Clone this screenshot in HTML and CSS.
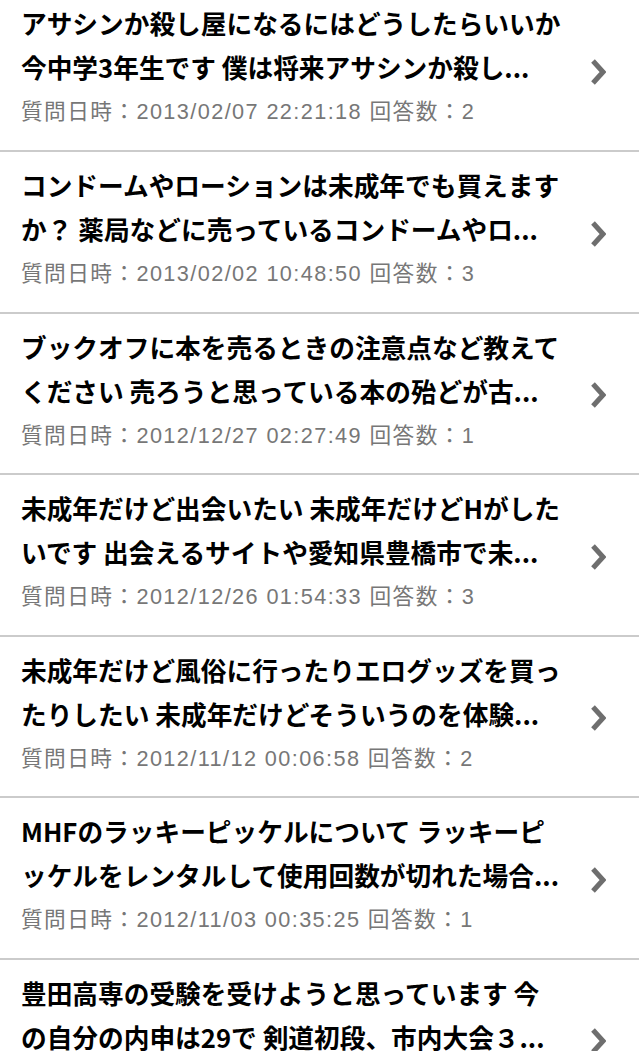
FILE: index.html
```html
<!DOCTYPE html>
<html lang="ja">
<head>
<meta charset="utf-8">
<title>質問一覧</title>
<link rel="stylesheet" href="styles.css">
</head>
<body>
<ul class="list">
  <li class="item">
    <div class="body">
      <p class="title"><span class="line">アサシンか殺し屋になるにはどうしたらいいか</span><span class="line">今中学3年生です 僕は将来アサシンか殺し...</span></p>
      <p class="meta">質問日時：2013/02/07 22:21:18 回答数：2</p>
    </div>
    <svg class="chev" viewBox="0 0 16 28" width="16" height="28"><path d="M3 3 L13 14 L3 25"/></svg>
  </li>
  <li class="item">
    <div class="body">
      <p class="title"><span class="line">コンドームやローションは未成年でも買えます</span><span class="line">か？ 薬局などに売っているコンドームやロ...</span></p>
      <p class="meta">質問日時：2013/02/02 10:48:50 回答数：3</p>
    </div>
    <svg class="chev" viewBox="0 0 16 28" width="16" height="28"><path d="M3 3 L13 14 L3 25"/></svg>
  </li>
  <li class="item">
    <div class="body">
      <p class="title"><span class="line">ブックオフに本を売るときの注意点など教えて</span><span class="line">ください 売ろうと思っている本の殆どが古...</span></p>
      <p class="meta">質問日時：2012/12/27 02:27:49 回答数：1</p>
    </div>
    <svg class="chev" viewBox="0 0 16 28" width="16" height="28"><path d="M3 3 L13 14 L3 25"/></svg>
  </li>
  <li class="item">
    <div class="body">
      <p class="title"><span class="line">未成年だけど出会いたい 未成年だけどHがした</span><span class="line">いです 出会えるサイトや愛知県豊橋市で未...</span></p>
      <p class="meta">質問日時：2012/12/26 01:54:33 回答数：3</p>
    </div>
    <svg class="chev" viewBox="0 0 16 28" width="16" height="28"><path d="M3 3 L13 14 L3 25"/></svg>
  </li>
  <li class="item">
    <div class="body">
      <p class="title"><span class="line">未成年だけど風俗に行ったりエログッズを買っ</span><span class="line">たりしたい 未成年だけどそういうのを体験...</span></p>
      <p class="meta">質問日時：2012/11/12 00:06:58 回答数：2</p>
    </div>
    <svg class="chev" viewBox="0 0 16 28" width="16" height="28"><path d="M3 3 L13 14 L3 25"/></svg>
  </li>
  <li class="item">
    <div class="body">
      <p class="title"><span class="line">MHFのラッキーピッケルについて ラッキーピ</span><span class="line">ッケルをレンタルして使用回数が切れた場合...</span></p>
      <p class="meta">質問日時：2012/11/03 00:35:25 回答数：1</p>
    </div>
    <svg class="chev" viewBox="0 0 16 28" width="16" height="28"><path d="M3 3 L13 14 L3 25"/></svg>
  </li>
  <li class="item">
    <div class="body">
      <p class="title"><span class="line">豊田高専の受験を受けようと思っています 今</span><span class="line">の自分の内申は29で 剣道初段、市内大会３...</span></p>
      <p class="meta">質問日時：2012/10/28 21:14:07 回答数：2</p>
    </div>
    <svg class="chev" viewBox="0 0 16 28" width="16" height="28"><path d="M3 3 L13 14 L3 25"/></svg>
  </li>
</ul>
</body>
</html>
```
FILE: styles.css
```css
html, body {
  margin: 0;
  padding: 0;
  background: #fff;
}
body {
  overflow: hidden;
  font-family: "Noto Sans CJK JP", "Noto Sans", sans-serif;
}
.list {
  list-style: none;
  margin: -9.6px 0 0 0;
  padding: 0;
}
.item {
  display: flex;
  align-items: center;
  border-bottom: 2px solid #cbcbcb;
  padding: 11px 0 22.6px 21px;
}
.body {
  flex: 1;
  min-width: 0;
}
.title {
  margin: 0;
  font-size: 25.7px;
  line-height: 44px;
  font-weight: 700;
  color: #000;
}
.line {
  display: block;
  white-space: nowrap;
}
.meta {
  margin: 8px 0 0 0;
  font-family: "Liberation Sans", "Noto Sans CJK JP", sans-serif;
  font-size: 21.7px;
  line-height: 30px;
  letter-spacing: 1.4px;
  color: #777;
}
.chev {
  flex: none;
  margin-right: 33px;
  margin-top: 15px;
  fill: none;
  stroke: #6e6e6e;
  stroke-width: 5;
  filter: blur(0.7px);
}
```
